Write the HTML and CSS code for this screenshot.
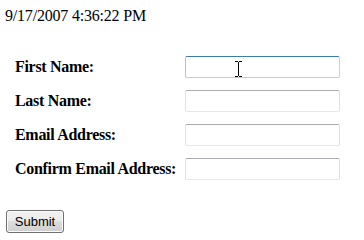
FILE: index.html
```html
<!DOCTYPE html>
<html>
<head>
<meta charset="utf-8">
<link rel="stylesheet" href="styles.css">
</head>
<body>
<div class="page">
  <div class="stamp">9/17/2007 4:36:22 PM</div>
  <form class="form">
    <label class="label">First Name:</label>
    <div class="cell">
      <input class="field field-hover" type="text">
      <svg class="ibeam" width="7" height="16" viewBox="0 0 7 16"><path d="M0 0.5h3M4 0.5h3M3.5 1v14M0 15.5h3M4 15.5h3" stroke="#000" stroke-width="1" fill="none"/></svg>
    </div>
    <label class="label">Last Name:</label>
    <div class="cell"><input class="field" type="text"></div>
    <label class="label">Email Address:</label>
    <div class="cell"><input class="field" type="text"></div>
    <label class="label">Confirm Email Address:</label>
    <div class="cell"><input class="field" type="text"></div>
  </form>
  <button class="submit" type="button">Submit</button>
</div>
</body>
</html>
```
FILE: styles.css
```css
html, body {
  margin: 0;
  padding: 0;
  background: #ffffff;
}
.page {
  padding-top: 7px;
  font-family: "Liberation Serif", "Times New Roman", serif;
  font-size: 16px;
  color: #000;
}
.stamp {
  margin-left: 5px;
  line-height: 18px;
  height: 18px;
  letter-spacing: -0.2px;
}
.form {
  margin: 25px 0 0 15px;
  display: grid;
  grid-template-columns: 170px 155px;
  grid-auto-rows: 34px;
  align-items: center;
}
.label {
  font-weight: bold;
  line-height: 18px;
  letter-spacing: -0.3px;
}
.cell {
  position: relative;
  height: 22px;
}
.field {
  display: block;
  box-sizing: border-box;
  width: 155px;
  height: 22px;
  margin: 0;
  padding: 0 2px;
  border: 1px solid;
  border-color: #abadb3 #dbdfe6 #e3e9ef #e2e3ea;
  border-radius: 2px;
  background: #fff;
  outline: none;
  font-family: "Liberation Sans", Arial, sans-serif;
  font-size: 13px;
}
.field-hover {
  border-color: #3d7bad #b7d9ed #b5cfe7 #a4c9e3;
}
.ibeam {
  position: absolute;
  left: 50px;
  top: 5px;
}
.submit {
  display: block;
  box-sizing: border-box;
  margin: 24px 0 0 6px;
  width: 58px;
  height: 23px;
  padding: 0;
  border: 1px solid #707070;
  border-radius: 3px;
  background: linear-gradient(#f2f2f2 0%, #ebebeb 50%, #dddddd 50%, #cfcfcf 100%);
  box-shadow: inset 0 0 0 1px #fcfcfc;
  font-family: "Liberation Sans", Arial, sans-serif;
  font-size: 13px;
  color: #000;
}
```
